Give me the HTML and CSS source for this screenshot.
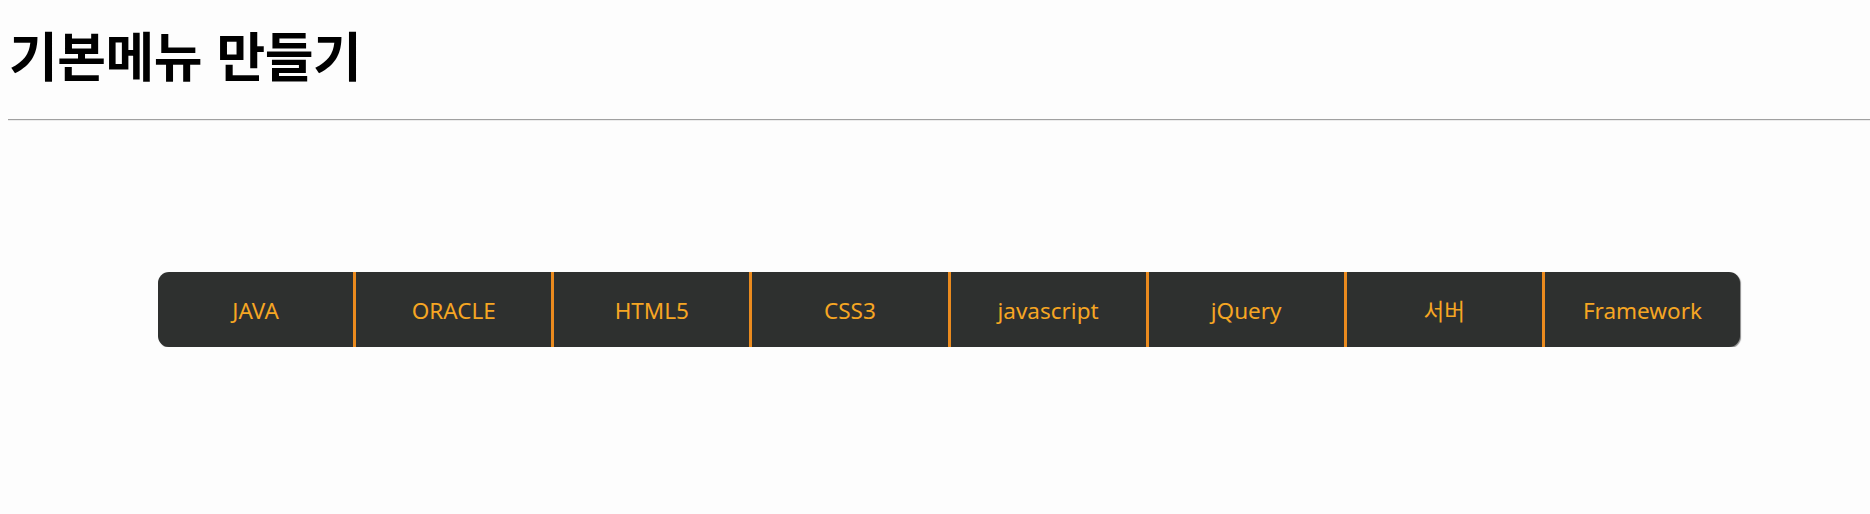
FILE: index.html
```html
<!DOCTYPE html>
<html lang="ko">
<head>
<meta charset="utf-8">
<title>기본메뉴 만들기</title>
<link rel="stylesheet" href="styles.css">
</head>
<body>
<h1 class="title">기본메뉴 만들기</h1>
<hr class="rule">
<nav class="menu">
  <ul class="menu-list">
    <li class="menu-item">JAVA</li>
    <li class="menu-item">ORACLE</li>
    <li class="menu-item">HTML5</li>
    <li class="menu-item">CSS3</li>
    <li class="menu-item">javascript</li>
    <li class="menu-item">jQuery</li>
    <li class="menu-item">서버</li>
    <li class="menu-item">Framework</li>
  </ul>
</nav>
</body>
</html>
```

FILE: styles.css
```css
html {
  background: #fdfdfd;
  overflow: hidden;
}
body {
  margin: 8px 0 8px 8px;
  font-family: "Noto Sans", "Noto Sans CJK KR", sans-serif;
}
.title {
  font-family: "Noto Sans CJK KR", sans-serif;
  font-weight: 700;
  font-size: 53px;
  letter-spacing: -0.5px;
  line-height: 1;
  margin: 20px 0 0 1px;
  color: #000;
}
.rule {
  display: block;
  box-sizing: border-box;
  width: 100%;
  margin: 38px 0 0 0;
  border: 0;
  border-top: 1px solid #a0a0a0;
  border-bottom: 1px solid #ececec;
  height: 2px;
}
.menu {
  margin: 151px 0 0 150px;
  width: 1582px;
}
.menu-list {
  list-style: none;
  margin: 0;
  padding: 0;
  display: flex;
  height: 75px;
  background: #2e302f;
  border-radius: 11px;
  box-shadow: 1px 1px 1px #8a8a8a;
  overflow: hidden;
}
.menu-item {
  flex: 1 1 0;
  display: flex;
  align-items: center;
  justify-content: center;
  padding-top: 1px;
  color: #f6a623;
  font-size: 22.5px;
  border-right: 3px solid #ea8a1e;
}
.menu-item:last-child {
  border-right: 0;
}
```
